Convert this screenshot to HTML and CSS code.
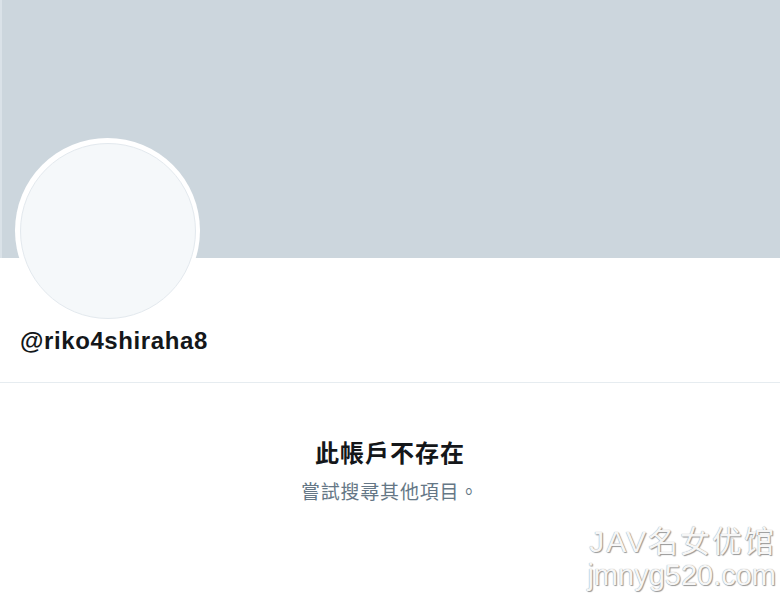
FILE: index.html
```html
<!DOCTYPE html>
<html lang="zh-Hant">
<head>
<meta charset="utf-8">
<title>@riko4shiraha8</title>
<link rel="stylesheet" href="styles.css">
</head>
<body>
<div class="page">
  <div class="banner"></div>
  <div class="profile">
    <div class="avatar-ring"><div class="avatar"></div></div>
    <div class="handle">@riko4shiraha8</div>
  </div>
  <div class="empty">
    <div class="empty-title">此帳戶不存在</div>
    <div class="empty-sub">嘗試搜尋其他項目。</div>
  </div>
  <div class="watermark">
    <div class="wm-line1">JAV名女优馆</div>
    <div class="wm-line2">jmnyg520.com</div>
  </div>
</div>
</body>
</html>
```

FILE: styles.css
```css
html, body {
  margin: 0;
  padding: 0;
  background: #ffffff;
}
.page {
  position: relative;
  width: 780px;
  height: 594px;
  overflow: hidden;
  font-family: "Liberation Sans", "Noto Sans CJK TC", sans-serif;
  color: #14171a;
}
.banner {
  height: 258px;
  background: #ccd6dd;
  border-left: 2px solid #dae2e8;
  box-sizing: border-box;
}
.profile {
  display: flex;
  flex-direction: column;
  padding-left: 15px;
  border-bottom: 1px solid #e6ecf0;
  height: 124px;
}
.avatar-ring {
  width: 185px;
  height: 185px;
  margin-top: -120px;
  border-radius: 50%;
  background: #ffffff;
  display: flex;
  align-items: center;
  justify-content: center;
}
.avatar {
  width: 174px;
  height: 174px;
  border-radius: 50%;
  background: #f5f8fa;
  border: 1px solid #e3e9ee;
}
.handle {
  margin-top: 3px;
  padding-left: 5px;
  font-size: 24px;
  letter-spacing: 0.6px;
  font-weight: 700;
  line-height: 30px;
  color: #14171a;
}
.empty {
  display: flex;
  flex-direction: column;
  align-items: center;
  padding-top: 53px;
}
.empty-title {
  font-family: "Noto Sans CJK TC", sans-serif;
  font-size: 24px;
  letter-spacing: 1px;
  font-weight: 700;
  line-height: 32px;
  color: #14171a;
}
.empty-sub {
  margin-top: 10px;
  font-family: "Noto Sans CJK TC", sans-serif;
  font-size: 19px;
  letter-spacing: 0.8px;
  line-height: 26px;
  color: #657786;
}
.watermark {
  position: absolute;
  right: 4px;
  bottom: 3px;
  display: flex;
  flex-direction: column;
  align-items: flex-end;
  font-family: "Liberation Sans", "Noto Sans CJK SC", sans-serif;
  color: #f6f6f6;
  text-shadow: 0 0 1px #8a8a8a, 1px 1px 1px #9a9a9a;
}
.wm-line1 {
  font-size: 30px;
  line-height: 34px;
  letter-spacing: 2px;
}
.wm-line2 {
  font-size: 29px;
  line-height: 32px;
}
```
